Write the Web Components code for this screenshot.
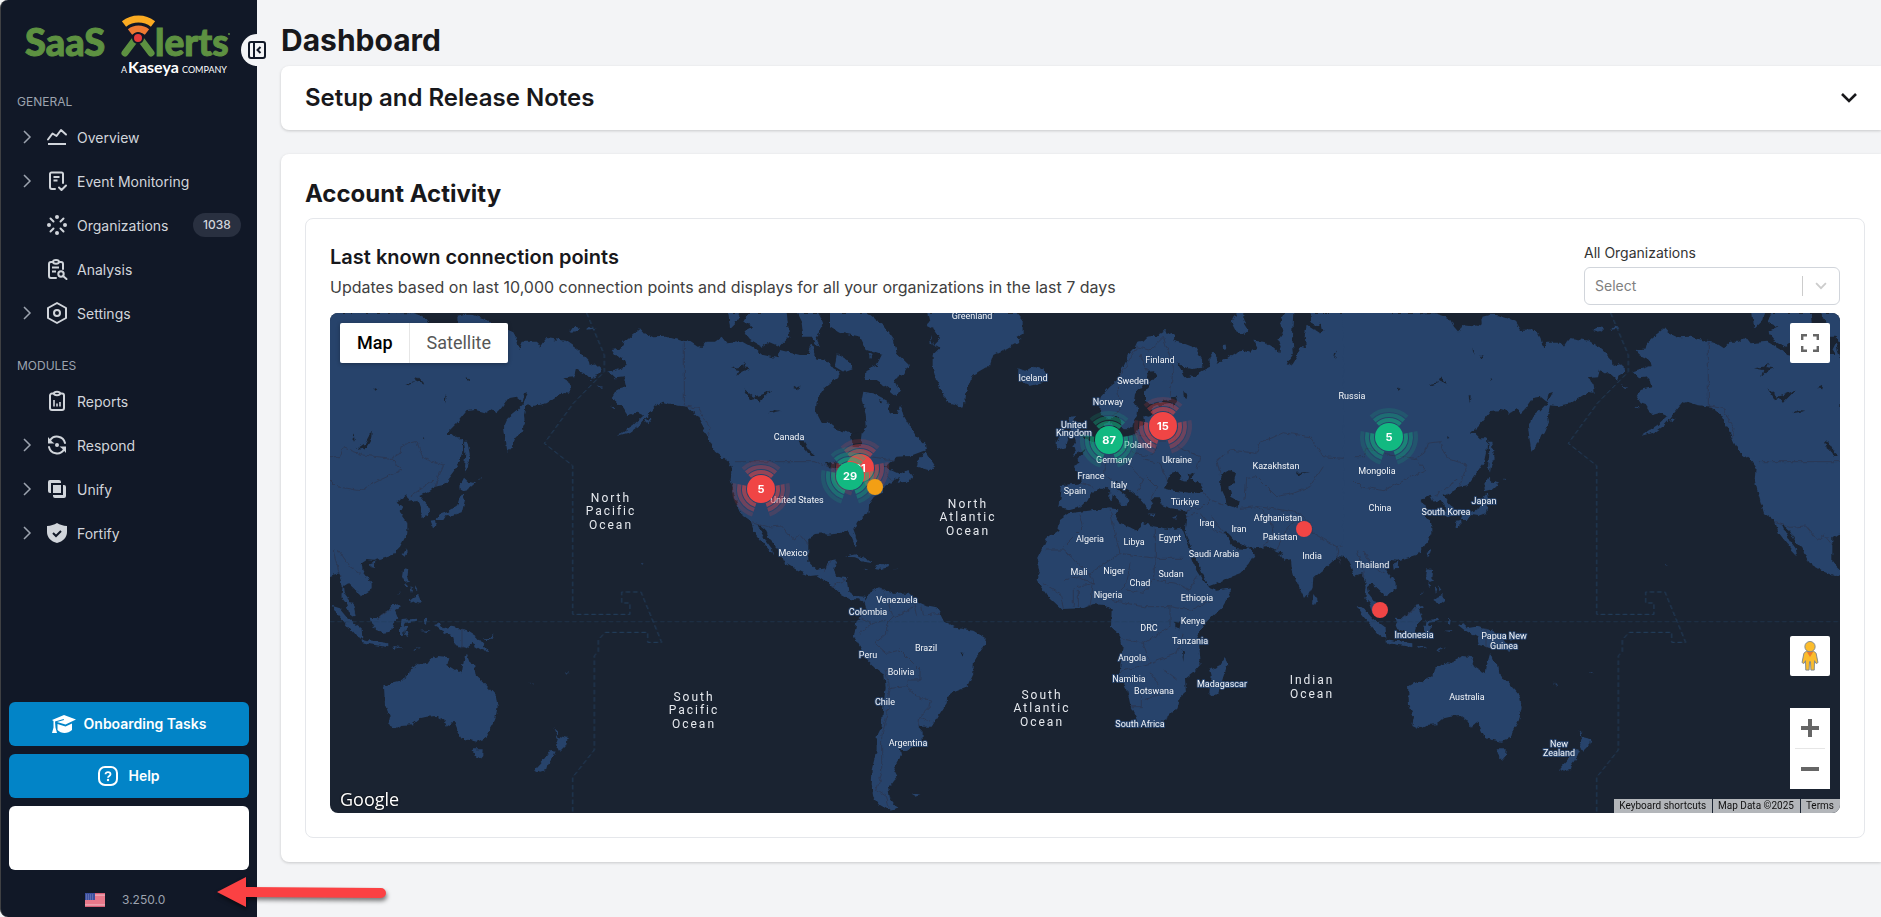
<!DOCTYPE html>
<html lang="en">
<head>
<meta charset="utf-8">
<title>SaaS Alerts - Dashboard</title>
<style>
  html, body { margin: 0; min-height: 100%; background: #f3f4f6; }
  body { font-family: Inter, "Liberation Sans", sans-serif; color: #18181b; overflow-x: hidden; }
</style>
</head>
<body>
<app-shell>
  <side-nav slot="nav">
    <nav-section heading="General">
      <nav-item icon="overview" expandable>Overview</nav-item>
      <nav-item icon="events" expandable>Event Monitoring</nav-item>
      <nav-item icon="orgs" badge="1038">Organizations</nav-item>
      <nav-item icon="analysis">Analysis</nav-item>
      <nav-item icon="settings" expandable>Settings</nav-item>
    </nav-section>
    <nav-section heading="Modules">
      <nav-item icon="reports">Reports</nav-item>
      <nav-item icon="respond" expandable>Respond</nav-item>
      <nav-item icon="unify" expandable>Unify</nav-item>
      <nav-item icon="fortify" expandable>Fortify</nav-item>
    </nav-section>
    <side-button slot="actions" icon="cap" wide>Onboarding Tasks</side-button>
    <side-button slot="actions" icon="help">Help</side-button>
  </side-nav>
  <collapsible-card>Setup and Release Notes</collapsible-card>
  <activity-card heading="Account Activity">
    <connection-panel></connection-panel>
  </activity-card>
</app-shell>

<script>
const define = (name, html, setup) => {
  const tpl = document.createElement('template');
  tpl.innerHTML = html;
  customElements.define(name, class extends HTMLElement {
    constructor() {
      super();
      this.attachShadow({ mode: 'open' }).append(tpl.content.cloneNode(true));
    }
    connectedCallback() { if (setup) setup(this, this.shadowRoot); }
  });
};

/* ---------- icons ---------- */
const S = 'fill="none" stroke="currentColor" stroke-width="2" stroke-linecap="round" stroke-linejoin="round"';
const ICONS = {
  chevron: ['0 0 16 16', `<path d="M5 2l6 6-6 6" fill="none" stroke="currentColor" stroke-width="1.5"/>`],
  down: ['0 0 20 20', `<path d="M3 6l7 7 7-7" fill="none" stroke="currentColor" stroke-width="2.6"/>`],
  overview: ['0 0 20 20', `<path d="M1 12.500l4.500-6 4 2.500L14 3l5 4.500" ${S}/><path d="M1 17h18" stroke="currentColor" stroke-width="2"/>`],
  events: ['0 0 20 20', `<path d="M8 18H5a2 2 0 0 1-2-2V3a1.500 1.500 0 0 1 1.500-1.500h10A1.500 1.500 0 0 1 16 3v9" ${S}/><path d="M6.500 6h6M6.500 9.500h4" fill="none" stroke="currentColor" stroke-width="1.800"/><path d="M12 16.500l2.500 2.500 4.500-4.500" ${S} />`],
  orgs: ['0 0 20 20', `<g fill="currentColor"><circle cx="10" cy="2" r="2"/><circle cx="10" cy="18" r="2"/><circle cx="2" cy="10" r="2"/><circle cx="18" cy="10" r="2"/></g><path d="M3.500 3.500l3 3M16.500 3.500l-3 3M3.500 16.500l3-3M16.500 16.500l-3-3" ${S}/>`],
  analysis: ['0 0 20 20', `<path d="M9 19H4a2 2 0 0 1-2-2V5a2 2 0 0 1 2-2h2M12 3h2a2 2 0 0 1 2 2v5" ${S}/><ellipse cx="9" cy="2.800" rx="3" ry="1.900" ${S}/><path d="M5 8.500h7M5 12.500h4" stroke="currentColor" stroke-width="1.800"/><circle cx="14" cy="15" r="2.700" ${S}/><path d="M16 17l3.500 3" ${S}/>`],
  settings: ['0 0 20 20', `<path d="M10 0L19 5v10l-9 5-9-5V5z" ${S}/><circle cx="10" cy="10" r="3" ${S}/>`],
  reports: ['0 0 20 20', `<path d="M7 2.500H5a2 2 0 0 0-2 2V17a2 2 0 0 0 2 2h10a2 2 0 0 0 2-2V4.500a2 2 0 0 0-2-2h-2" ${S}/><ellipse cx="10" cy="2.500" rx="3" ry="1.800" ${S}/><path d="M7 15.500V9M10 15.500v-3M13 15.500V11" stroke="currentColor" stroke-width="1.600"/>`],
  respond: ['0 0 20 20', `<path d="M3 5.500a8.200 8.200 0 0 1 15 2.500M17 14.500A8.200 8.200 0 0 1 2 12" ${S}/><path d="M1 2v6.500h6.500L5 6.500zM19 18v-6.500h-6.500L15 13.500z" fill="currentColor"/><circle cx="10" cy="10" r="2" fill="currentColor"/>`],
  unify: ['0 0 20 20', `<path d="M3 1h9a2 2 0 0 1 2 2v1H4v10H3a2 2 0 0 1-2-2V3a2 2 0 0 1 2-2z" fill="currentColor"/><path d="M6 6h8v8H6z" fill="currentColor"/><path d="M16 6h1a2 2 0 0 1 2 2v9a2 2 0 0 1-2 2H8a2 2 0 0 1-2-2v-1h10z" fill="currentColor"/>`],
  fortify: ['0 0 20 20', `<path d="M10 0c3 2 6 2.600 10 3v6c0 5.500-4 9.500-10 11C4 18.500 0 14.500 0 9V3c4-.4 7-1 10-3z" fill="currentColor"/><path d="M6 10l3 3 5-5" fill="none" stroke="#111827" stroke-width="2"/>`],
  cap: ['0 0 24 18', `<path d="M12 0l12 4.500L13.500 9.500 5 7l7-2-.3-1L3 6.500l.5 6L5 18H0l1.500-5.500V6L0 5z" fill="currentColor"/><path d="M5.500 9l8 2.500L20 8.500V15c-4 4-11 4-14.500 0z" fill="currentColor"/>`],
  help: ['0 0 20 20', `<rect x="1" y="1" width="18" height="18" rx="6" fill="none" stroke="currentColor" stroke-width="2"/><path d="M7.500 8.300C7.500 5.400 12.500 5.400 12.500 8.300 12.500 10 10 10 10 11.800" fill="none" stroke="currentColor" stroke-width="1.800"/><circle cx="10" cy="14" r="1.200" fill="currentColor"/>`],
  collapse: ['0 0 18 18', `<rect x="1" y="1" width="16" height="16" rx="2" fill="none" stroke="currentColor" stroke-width="2"/><path d="M6 1v16M12.500 6l-3 3 3 3" fill="none" stroke="currentColor" stroke-width="2"/>`],
  full: ['0 0 18 18', `<path d="M1.200 6V1.200H6M12 1.200h4.800V6M16.800 12v4.800H12M6 16.800H1.200V12" fill="none" stroke="currentColor" stroke-width="2.400"/>`],
  plus: ['0 0 18 18', `<path d="M0 9h18M9 0v18" stroke="currentColor" stroke-width="4"/>`],
  minus: ['0 0 18 18', `<path d="M0 9h18" stroke="currentColor" stroke-width="4"/>`],
  pegman: ['0 0 18 32', `<path d="M5 11h8l2.500 2L17.500 23l-2 1-1.700-3-.3 10H10l-.5-9H8.500L8 31H4.500L4.200 21l-1.700 3-2-1L2.500 13z" fill="#fbbc2c" stroke="#80868b" stroke-width="1"/><path d="M5.500 11.500h7L9 17z" fill="#ef7b28"/><circle cx="9" cy="6" r="5.500" fill="#fbbc2c" stroke="#80868b" stroke-width="1"/>`],
  flag: ['0 0 20 14', `<path d="M0 0h20v14H0z" fill="#e8788a"/><path d="M0 1h20M0 13h20" stroke="#c84560" stroke-width="1"/><path d="M10 2h10M0 12h20" stroke="#f3c4cc" stroke-width="1"/><path d="M0 0h10v7H0z" fill="#3c4f9e"/><path d="M1 2h8M1 4h8M1 6h8" stroke="#7f8cc4" stroke-width="1" stroke-dasharray="1 1"/>`],
};
define('ui-icon', `<style>:host{display:inline-flex;flex:none;width:20px;height:20px}svg{display:block;width:100%;height:100%;overflow:visible}</style><svg aria-hidden="true"></svg>`,
  (el, root) => {
    const svg = root.querySelector('svg');
    const icon = ICONS[el.getAttribute('name')];
    svg.setAttribute('viewBox', icon[0]);
    svg.innerHTML = icon[1];
  });

/* ---------- shell ---------- */
define('app-shell', `<style>
  :host { display: grid; grid-template-columns: 257px minmax(0, 1fr); min-height: 100vh; }
  main { display: flex; flex-direction: column; padding: 22px 0 55px 24px; position: relative; min-width: 0; box-sizing: border-box; }
  h1 { margin: 0 0 8px; font-size: 30px; line-height: 36px; font-weight: 700; color: #18181b; }
  .cards { display: flex; flex-direction: column; gap: 24px; }
  .toggle { position: absolute; left: -16px; top: 34px; width: 32px; height: 32px; padding: 0; border: 0; border-radius: 50%; background: #f3f4f6; color: #111827; display: grid; place-items: center; }
  .toggle ui-icon { width: 18px; height: 18px; }
  call-arrow { position: absolute; left: 217px; bottom: 6px; }
  .nav { position: relative; display: grid; }
</style>
<div class="nav"><slot name="nav"></slot></div>
<main>
  <button class="toggle" aria-label="Collapse navigation"><ui-icon name="collapse"></ui-icon></button>
  <h1>Dashboard</h1>
  <div class="cards"><slot></slot></div>
</main>
<call-arrow></call-arrow>`);

define('call-arrow', `<style>:host{display:block;width:172px;height:36px}svg{display:block;overflow:visible;filter:drop-shadow(1px 3px 2px rgba(0,0,0,.5))}</style>
<svg width="172" height="36" viewBox="0 0 172 36" aria-hidden="true"><path d="M0 17L29 2V12L164 13a5 5 0 0 1 0 10L29 22V32z" fill="#fb4143"/></svg>`);

/* ---------- side navigation ---------- */
define('brand-logo', `<style>:host{display:block}svg{display:block;overflow:visible}</style>
<svg width="212" height="84" viewBox="0 0 212 84" role="img" aria-label="SaaS Alerts, a Kaseya company">
  <g font-family="Lato, sans-serif" font-weight="900" font-size="38" fill="#5d9141" stroke="#5d9141" stroke-width="1">
    <text x="1" y="56">SaaS</text><text x="131" y="56" font-size="37">lerts</text></g>
  <path d="M101 53L110 41M127 53L118 41" stroke="#5d9141" stroke-width="7" stroke-linecap="round"/>
  <path d="M100 24a24 24 0 0 1 29 0" fill="none" stroke="#fbab22" stroke-width="7"/>
  <path d="M106 32a14 14 0 0 1 17 0" fill="none" stroke="#ee7a33" stroke-width="7"/>
  <circle cx="114" cy="38" r="5" fill="#e43b3b" stroke="#111827" stroke-width="2"/>
  <circle cx="205" cy="34" r="1" fill="#5d9141"/>
  <g font-family="Lato, sans-serif" fill="#fff"><text x="97" y="73" font-size="9">A</text>
  <text x="104" y="73" font-size="16" font-weight="700">Kaseya</text>
  <text x="158" y="73" font-size="9">COMPANY</text></g>
</svg>`);

define('side-nav', `<style>
  :host { display: flex; flex-direction: column; box-sizing: border-box; width: 257px; background: #111827; border-left: 1px solid #3f4043; border-radius: 8px 0 0 8px; }
  brand-logo { padding-left: 23px; }
  nav { display: flex; flex-direction: column; gap: 13px; }
  .foot { margin-top: auto; padding: 0 8px; display: flex; flex-direction: column; gap: 8px; }
  .blank { height: 64px; border-radius: 6px; background: #fff; }
  .version { display: flex; align-items: center; gap: 17px; height: 35px; padding: 4px 0 0 76px; color: #9ca3af; font-size: 12px; }
  .version ui-icon { height: 14px; }
</style>
<brand-logo></brand-logo>
<nav aria-label="Main"><slot></slot></nav>
<div class="foot"><slot name="actions"></slot><div class="blank"></div>
<div class="version"><ui-icon name="flag"></ui-icon><span>3.250.0</span></div></div>`);

define('nav-section', `<style>
  :host { display: block; }
  h2 { margin: 0; padding: 8px 16px 3px; font-size: 12px; line-height: 20px; font-weight: 400; text-transform: uppercase; color: #9ca3af; }
</style><h2></h2><slot></slot>`, (el, root) => { root.querySelector('h2').textContent = el.getAttribute('heading'); });

define('nav-item', `<style>
  :host { display: block; }
  a { display: flex; align-items: center; height: 44px; padding: 0 16px 0 18px; color: #d1d5db; font-size: 14px; text-decoration: none; }
  .chev { width: 16px; height: 16px; margin-right: 12px; color: #9ca3af; }
  .chev ui-icon { width: 16px; height: 16px; }
  .label { margin-left: 10px; flex: 1; }
  .badge { min-width: 48px; height: 24px; border-radius: 12px; background: #293040; font-size: 12px; font-weight: 500; line-height: 24px; text-align: center; }
</style><a href="#"><span class="chev"></span><span class="label"><slot></slot></span></a>`, (el, root) => {
  if (el.hasAttribute('expandable')) root.querySelector('.chev').innerHTML = '<ui-icon name="chevron"></ui-icon>';
  const icon = document.createElement('ui-icon');
  icon.setAttribute('name', el.getAttribute('icon'));
  root.querySelector('.chev').after(icon);
  if (el.hasAttribute('badge')) {
    const b = document.createElement('span');
    b.className = 'badge'; b.textContent = el.getAttribute('badge');
    root.querySelector('a').append(b);
  }
});

define('side-button', `<style>
  :host { display: block; }
  button { display: flex; align-items: center; justify-content: center; gap: 10px; width: 100%; height: 44px; border: 0; border-radius: 6px; background: #0284c7; color: #fff; font: 600 14px/20px Inter, sans-serif; }
  :host([wide]) button { gap: 8px; }
  :host([wide]) ui-icon { width: 24px; height: 18px; }
</style><button><slot></slot></button>`, (el, root) => {
  const icon = document.createElement('ui-icon');
  icon.setAttribute('name', el.getAttribute('icon'));
  root.querySelector('button').prepend(icon);
});
</script>

<script>
/* ---------- cards ---------- */
define('collapsible-card', `<style>
  :host { display: block; border-radius: 8px 0 0 8px; background: #fff; box-shadow: 0 1px 3px rgba(0,0,0,.18); }
  button { display: flex; align-items: center; justify-content: space-between; width: 100%; height: 64px; padding: 0 22px 0 24px; border: 0; background: none; color: #18181b; font: 600 24px/32px Inter, sans-serif; text-align: left; }
</style><button aria-expanded="false"><span><slot></slot></span><ui-icon name="down"></ui-icon></button>`);

define('activity-card', `<style>
  :host { display: block; padding: 24px 16px 24px 24px; border-radius: 8px 0 0 8px; background: #fff; box-shadow: 0 1px 3px rgba(0,0,0,.18); }
  h2 { margin: 0 0 8px; font-size: 24px; line-height: 32px; font-weight: 700; }
</style><h2></h2><slot></slot>`, (el, root) => { root.querySelector('h2').textContent = el.getAttribute('heading'); });

define('org-select', `<style>
  :host { display: block; width: 256px; }
  label { display: block; font-size: 14px; line-height: 20px; color: #333; margin-bottom: 4px; }
  .box { display: grid; grid-template-columns: 1fr 37px; align-items: center; height: 38px; box-sizing: border-box; border: 1px solid #d1d5db; border-radius: 6px; }
  select { grid-area: 1 / 1 / 2 / 3; appearance: none; height: 100%; width: 100%; padding: 0 10px; border: 0; background: none; color: #808080; font: 14px/20px Inter, sans-serif; }
  .mark { grid-area: 1 / 2; display: flex; align-items: center; justify-content: center; height: 20px; border-left: 1px solid #ccc; color: #ccc; pointer-events: none; }
  .mark ui-icon { width: 14px; height: 14px; }
</style><label for="org">All Organizations</label>
<div class="box"><select id="org"><option>Select</option></select><span class="mark"><ui-icon name="down"></ui-icon></span></div>`);

define('connection-panel', `<style>
  :host { display: block; border: 1px solid #e5e7eb; border-radius: 8px; padding: 24px; }
  header { display: flex; justify-content: space-between; align-items: flex-end; margin-bottom: 8px; }
  h3 { margin: 0 0 4px; font-size: 20px; line-height: 28px; font-weight: 600; }
  p { margin: 0 0 6px; font-size: 16px; line-height: 24px; color: #404040; }
</style>
<header><div><h3>Last known connection points</h3>
<p>Updates based on last 10,000 connection points and displays for all your organizations in the last 7 days</p></div>
<org-select></org-select></header>
<world-map></world-map>`);

/* ---------- map data: polygons in thirds of a map pixel, one group per region origin ---------- */
const REGIONS = [
  { at: '2040 -39', land: [
    // Europe, western and central Asia, India
    '290,356 275,345 268,325 272,290 300,260 325,240 335,210 350,180 358,158 375,140 382,125 400,122 412,110 430,108 440,112 450,100 465,90 470,102 485,96 496,106 490,122 520,130 555,143 576,175 577,203 545,207 520,200 502,190 512,207 520,225 534,238 540,226 560,232 566,222 572,214 600,200 598,170 610,155 625,178 620,192 650,175 680,155 700,152 718,158 728,148 742,143 730,122 760,125 785,140 808,160 812,140 805,120 818,100 810,70 820,39 1230,39 1230,760 1004,772 985,768 972,780 945,805 910,835 908,860 895,885 885,897 872,870 855,835 845,800 843,778 820,782 808,765 820,758 790,750 770,742 735,745 700,735 680,728 655,700 640,695 655,715 668,735 680,748 702,750 715,738 735,762 715,795 690,820 650,835 620,850 598,858 590,845 575,815 560,778 545,745 530,712 524,695 528,660 532,632 505,628 480,625 455,615 450,592 430,592 422,600 430,612 415,630 402,612 385,592 365,575 340,560 322,545 308,548 330,575 352,592 358,602 340,618 325,600 298,572 285,560 265,572 245,575 232,600 210,622 180,630 148,620 152,590 156,555 215,550 213,520 188,498 208,488 205,470 225,452 245,430 272,415 288,408 284,372 300,362 308,378 298,398 320,408 345,410 372,405 388,385 402,368 400,345 415,350 430,345 425,325 440,318 480,312 505,300 480,298 440,308 415,312 405,300 405,275 418,250 440,226 432,214 415,215 410,235 395,258 375,282 372,305 385,325 383,345 372,360 368,380 352,388 340,388 333,365 322,345 306,352',
    // Africa
    '178,640 235,632 300,625 322,628 315,650 328,670 360,682 380,692 395,668 430,678 480,688 510,684 520,694 538,740 548,780 560,810 580,840 600,865 620,872 662,865 662,880 635,925 610,945 580,975 562,1010 568,1040 572,1090 550,1115 525,1135 528,1180 505,1200 500,1225 475,1250 440,1275 390,1282 380,1250 360,1210 352,1170 328,1125 335,1060 338,1040 330,1005 303,980 305,928 280,915 250,912 220,925 155,927 110,885 80,840 88,810 80,780 95,750 110,715 145,690 150,660',
    '645,1070 652,1095 640,1130 625,1180 610,1190 598,1180 600,1155 605,1130 600,1110 630,1095',
    '910,882 923,900 915,915 906,910',
    '178,350 198,348 190,365 205,370 203,390 225,415 245,428 235,445 205,458 185,468 198,450 186,442 198,425 190,400 172,375', '150,405 172,403 175,420 168,442 140,450 140,425',
    '25,205 45,212 70,200 88,206 100,204 112,232 95,250 60,258 38,246 45,235 24,232',
    '680,39 665,70 680,98 708,102 715,85 700,60 700,39', '638,134 650,134 652,145 640,148',
    '326,612 350,608 354,618', '298,580 308,580 306,603 298,600', '412,640 440,642 430,646', '486,652 502,645 496,656'],
    water: ['462,565 470,545 482,520 500,515 515,530 508,540 530,545 535,525 555,515 540,535 575,555 580,575 550,580 515,575 490,572',
    '655,510 678,518 672,545 658,560 664,590 686,602 682,625 650,615 645,590 632,562 630,535 640,515',
    '850,39 905,39 900,60 915,80 935,70 940,95 928,100 905,85 890,75 884,110 888,145 868,140 860,170 848,190 830,198 836,182 852,160 846,110', '484,292 500,290 504,305 490,320', '520,275 532,282 530,300 522,295', '858,518 900,516 862,526', '975,160 984,155 972,178', '496,965 512,968 508,988 496,985', '515,1050 522,1055 520,1085'],
    lines: 'M322,260L330,330L300,350M325,240L380,140L420,150L460,112L490,200L480,290M390,165L410,215M215,550L250,562M272,415L265,450L290,480L280,520L310,545M345,410L350,450L300,460M370,405L430,410L440,450L420,470L350,455M430,345L440,410M480,312L470,360L500,420L440,420M500,440L570,470L560,510M400,480L450,490L470,545M360,500L400,540L380,580M410,530L440,560L420,600M530,632L580,620L600,600L580,575M605,650L640,695M600,600L640,615M570,640L610,690L640,700M530,650L560,640M630,520L620,480L660,450L740,460L750,430L820,398L900,410L940,470L1000,475L1010,460L1050,480L1090,570L1150,570L1230,530M705,600L710,535L740,530L800,590L850,580L900,560L940,500M690,625L740,620L780,650L790,700L760,740M740,620L820,630L870,640L830,690L800,750M870,640L900,670L910,700L980,740L1050,730M980,740L990,790M1060,710L1050,790L1070,820M210,640L220,680L160,740M300,625L310,680L330,760L240,820L160,750L110,750M436,680L436,775L520,775M330,760L436,775M240,820L250,850L200,860M360,790L350,850L300,900M436,775L430,840L400,880L350,870M430,840L500,850L540,870L560,830M300,900L400,920L480,920L540,930L610,900M330,1015L400,1030L480,980L480,920M400,1030L420,1090L330,1115M420,1090L500,1060L520,1000M420,1115L460,1180L400,1200M394,1170L394,1220L360,1220M460,1110L500,1140M165,840L200,830L250,850L240,920M205,920L205,870M190,920L190,865M160,925L150,880L100,850' },
  { at: '-30 -39', land: [
    // East Asia
    '0,39 273,40 300,48 318,58 330,80 343,95 353,75 400,80 413,70 412,50 435,44 458,45 490,55 513,65 528,90 560,88 580,97 590,115 598,150 608,125 648,125 660,140 668,128 680,114 735,122 775,150 803,180 806,195 825,190 845,208 828,225 818,242 800,225 768,208 762,232 730,235 748,245 752,278 732,276 710,290 680,310 640,318 618,316 612,345 615,370 602,400 588,410 575,440 562,455 557,420 552,380 565,350 590,330 610,308 627,276 615,280 608,305 590,290 565,295 540,330 530,340 515,328 500,338 470,330 440,333 410,370 378,402 395,402 408,415 430,415 428,450 420,485 400,515 370,555 345,560 330,572 298,588 310,602 325,618 328,645 310,655 303,640 302,618 290,600 268,605 258,584 230,605 250,620 240,640 262,670 262,700 240,740 215,765 160,782 140,780 125,790 128,812 155,848 155,868 120,890 112,875 85,850 72,858 75,882 100,915 108,953 88,940 78,910 64,892 68,858 55,820 30,828 18,795 0,760',
    '432,425 442,425 452,475 442,492 438,518 432,500 436,460', '432,533 445,545 465,550 445,568 420,574 418,560', '428,580 435,600 425,640 400,648 380,645 370,660 350,660 355,645 385,635 410,620 420,590', '332,662 348,660 350,675 340,685', '258,745 263,755 252,772 248,762', '150,790 166,784 164,802 152,806',
    '250,805 265,808 262,835 270,845 255,848 246,830', '280,890 295,885 302,902 288,913 268,900', '252,850 262,856 256,860', '272,862 280,866 276,880', '285,856 292,868 286,874', '232,887 244,872 236,886', '477,538 486,530 482,540',
    '38,918 60,925 85,955 125,985 127,1015 105,1005 75,970 50,940', '125,1018 155,1022 205,1030 205,1042 150,1033 125,1026', '220,1038 250,1042 222,1046', '280,1050 304,1039 284,1054',
    '152,953 175,955 200,935 222,908 240,922 225,930 235,955 220,970 212,995 190,998 165,990 155,965', '245,960 288,956 288,962 255,968 250,978 268,978 258,988 268,1012 256,1005 252,988 248,1012 240,1010 240,985', '312,958 320,956 318,975 312,970', '300,992 332,990 320,996',
    '342,975 360,970 368,985 395,980 440,990 470,1010 485,1028 505,1053 485,1050 455,1032 440,1045 405,1035 400,1012 378,1000 358,988', '492,1015 512,1014 520,1003 518,1015 500,1022',
    // Australia and New Zealand
    '192,1160 210,1150 240,1142 265,1128 270,1108 285,1100 300,1088 322,1092 332,1078 355,1068 388,1072 382,1095 405,1110 425,1120 432,1080 438,1058 448,1085 462,1095 468,1128 490,1145 510,1168 528,1188 533,1220 525,1260 505,1295 500,1313 470,1325 425,1315 412,1290 402,1265 380,1280 375,1265 350,1248 320,1250 300,1255 278,1273 245,1275 225,1285 205,1275 210,1250 195,1215',
    '458,1348 488,1348 487,1365 475,1379 464,1368', '700,1285 712,1295 715,1310 743,1317 738,1335 718,1355 708,1335 714,1315', '692,1350 708,1352 700,1370 682,1395 678,1410 660,1415 645,1408 670,1380', '628,1147 642,1155 640,1158', '738,1117 746,1117 744,1121', '963,791 971,794 966,797', '748,90 762,80 780,85 770,94 752,95', '830,256 850,262 840,264'],
    water: ['158,395 157,412 140,440 110,447 135,430 150,402', '290,228 313,254 285,240', '255,252 290,246 262,256', '100,400 105,425 98,415', '160,262 172,268 166,272', '440,235 448,238 442,242', '445,203 460,212', '374,283 380,290 376,310', '310,408 316,414 310,416', '408,168 415,165 414,178', '386,140 390,150 388,168', '540,222 546,230'],
    lines: 'M30,470L60,470L70,443L130,465L215,475L245,510L180,540L120,572L50,560L30,540M215,475L240,460L250,430L290,425L310,475L370,495L345,560M270,590L340,540M426,985L426,1045M55,750L90,800L120,820M40,752L60,830M175,955L215,925' },
  { at: '1110 -39', land: [
    // North America
    '0,145 -30,125 -65,120 -100,110 -140,112 -168,98 -180,85 -205,105 -230,125 -235,145 -265,150 -255,165 -225,180 -220,198 -275,215 -255,235 -225,232 -218,262 -250,270 -262,290 -250,310 -235,315 -215,345 -190,338 -170,347 -200,375 -250,408 -210,397 -180,375 -150,340 -125,310 -110,305 -80,315 -40,320 -10,345 10,380 30,428 45,455 85,485 95,500 92,540 105,590 120,640 152,662 165,700 185,725 205,750 219,765 215,745 198,722 180,690 172,672 195,690 210,720 235,745 255,790 300,815 330,828 350,826 368,838 400,860 425,885 450,898 475,898 492,905 493,890 470,888 445,878 440,835 410,830 402,812 410,778 385,782 377,805 350,810 325,785 325,715 345,702 370,700 385,704 420,700 428,692 445,695 455,710 468,742 472,722 460,690 472,665 505,640 508,610 522,590 545,580 555,558 575,545 600,530 590,548 620,545 640,530 625,510 598,522 572,510 555,500 590,470 630,468 678,450 675,430 650,410 630,380 610,345 602,315 590,345 570,340 560,300 520,280 490,275 485,300 497,340 500,380 485,400 480,440 460,440 452,400 410,388 385,365 365,368 348,335 350,300 375,265 395,248 415,230 420,215 400,205 385,185 350,175 335,130 325,150 335,165 300,165 240,150 235,175 190,165 170,148 130,125 80,130 65,110 45,125 20,125',
    '85,39 90,85 115,60 120,39', '145,39 260,39 268,110 240,140 205,125 185,140 150,120 130,95 160,80 130,65', '290,39 355,39 370,80 350,110 360,145 335,110 310,110 305,70', '390,39 390,80 415,95 430,100 480,110 500,150 545,165 530,195 500,210 495,240 525,240 560,262 590,288 600,270 580,240 610,225 627,195 590,160 582,120 550,75 510,45 500,39', '410,160 440,180 458,205 430,215 405,200', '505,160 515,165 510,175',
    '655,480 675,455 688,475 705,500 685,510 650,500', '-342,90 -330,80 -310,85', '-165,360 -145,356 -155,370', '-270,320 -255,322 -262,326',
    '685,39 690,60 680,75 700,85 720,115 700,135 690,108 692,130 718,145 698,165 698,200 708,240 725,270 740,305 765,312 782,323 792,318 795,280 808,250 815,230 835,215 870,195 880,165 920,145 965,120 948,112 968,100 968,60 950,39',
    '435,770 470,763 500,778 520,790 500,787 465,772', '528,795 550,792 570,800 545,807 525,804', '490,806 502,808 494,810', '582,806 594,807 588,810',
    // South America
    '490,905 510,875 540,862 548,872 560,870 580,878 630,878 640,900 675,915 710,922 725,945 735,965 775,985 820,992 857,1015 855,1035 822,1080 820,1120 800,1162 765,1175 742,1190 740,1210 720,1240 695,1280 655,1280 668,1295 668,1325 620,1350 600,1350 603,1365 580,1405 593,1430 565,1465 570,1495 595,1526 570,1532 540,1515 520,1490 512,1450 515,1410 530,1350 530,1310 545,1280 550,1220 557,1160 553,1125 520,1100 500,1080 480,1040 462,1010 470,960 485,950 497,930', '636,1482 662,1482 645,1487', '832,1516 846,1522'],
    water: ['90,205 120,200 135,188 130,202 150,205 125,215 112,228 118,210', '130,265 160,290 180,285 215,270 190,295 180,305 165,295 150,298', '205,340 220,330 245,332 215,338', '280,265 298,256 295,268', '300,420 312,425 330,455 345,468 330,468 318,450 305,440', '375,490 400,485 425,495 415,505 385,505', '440,510 450,520 445,560 438,540', '140,382 148,385', '600,405 608,412', '535,300 550,305 545,312', '785,1060 790,1055 788,1070', '800,1130 812,1135', '455,400 480,400 480,440 458,440'],
    lines: 'M-47,125L-47,318L-30,320L-5,325L30,385L25,410M105,485L345,485L390,500L440,530M155,668L200,682L245,678L280,720L300,705L325,735M560,520L575,545M510,470L580,480M370,815L385,795L395,780M395,860L440,835M545,870L560,900L580,950L560,970L560,1000L525,1030L560,1060L600,1050L640,1090L660,1110L660,1140L625,1140L620,1160L570,1165L555,1110M485,955L520,970L480,1000M520,970L560,960M580,950L620,935L640,920M665,920L670,945L720,940M640,900L650,950M620,1160L660,1195L695,1200L690,1220L660,1250L655,1280M660,1250L700,1270M570,1165L560,1250L545,1310L545,1420L530,1470L560,1490L568,1530' },
];
const DASHES = 'M770,0L823,126V176L730,271L643,391L728,458V904H900V870H875V837H933L995,988H953V958H825L805,981V1016L793,1028V1311L728,1393V1500';

const LABELS = [['Greenland',642,3],['Canada',459,124],['United States',467,187],['Mexico',463,240],['Iceland',703,65],['Finland',830,47],['Sweden',803,68],['Norway',778,89],['United',744,112],['Kingdom',744,120],['Poland',808,132],['Germany',784,147],['Ukraine',847,147],['Russia',1022,83],['Kazakhstan',946,153],['Mongolia',1047,158],['France',761,163],['Italy',789,172],['Spain',745,178],['Türkiye',855,189],['China',1050,195],['Afghanistan',948,205],['Iraq',877,210],['Iran',909,216],['Pakistan',950,224],['Algeria',760,226],['Libya',804,229],['Egypt',840,225],['Saudi Arabia',884,241],['India',982,243],['Mali',749,259],['Niger',784,258],['Chad',810,270],['Sudan',841,261],['Nigeria',778,282],['Ethiopia',867,285],['Kenya',863,308],['DRC',819,315],['Tanzania',860,328],['Angola',802,345],['Namibia',799,366],['Botswana',824,378],['Madagascar',892,371],['South Africa',810,411],['Thailand',1042,252],['Indonesia',1084,322],['Venezuela',567,287],['Colombia',538,299],['Brazil',596,335],['Peru',538,342],['Bolivia',571,359],['Chile',555,389],['Argentina',578,430],['Papua New',1174,323],['Guinea',1174,333],['Australia',1137,384],['New',1229,431],['Zealand',1229,440],['Japan',1154,188],['South Korea',1116,199]];
const OCEANS = [['North',281,185],['Pacific',281,198],['Ocean',281,212],['North',638,191],['Atlantic',638,204],['Ocean',638,218],['South',364,384],['Pacific',364,397],['Ocean',364,411],['South',712,382],['Atlantic',712,395],['Ocean',712,409],['Indian',982,367],['Ocean',982,381]];
const RED = '#f04545', GREEN = '#12b981', AMBER = '#f39f15';
const CLUSTERS = [['5',431,176,RED],['21',530,155,RED],['29',520,163,GREEN],['87',779,127,GREEN],['15',833,113,RED],['5',1059,124,GREEN]];
const DOTS = [[545,174,AMBER],[974,216,RED],[1050,297,RED]];

const poly = p => `<path d="M${p}z"/>`;
const region = r => `<g transform="translate(${r.at})"><g fill="#27436b">${r.land.map(poly).join('')}</g><g fill="#1a2331">${r.water.map(poly).join('')}</g><path d="${r.lines}" fill="none" stroke="#2b3650" stroke-width="2.500"/></g>`;
const cluster = ([n, x, y, c]) => `<g transform="translate(${x} ${y})"><g fill="none" stroke="${c}" stroke-width="4" transform="rotate(-132)">
  ${[[17, .55], [22, .36], [27, .16]].map(([r, o]) => `<circle r="${r}" pathLength="360" stroke-dasharray="84 36" opacity="${o}"/>`).join('')}</g>
  <circle r="14" fill="${c}"/><text class="count" y="4">${n}</text></g>`;

define('world-map', `<style>
  :host { display: grid; grid-template: 500px / minmax(0, 1fr); position: relative; overflow: hidden; border-radius: 8px; background: #1a2331; font-family: Roboto, sans-serif; }
  svg.canvas { width: 100%; height: 100%; display: block; }
  text { text-anchor: middle; fill: #f4f6f9; }
  .place { font-size: 9px; stroke: #27436b; stroke-width: 2px; paint-order: stroke; stroke-linejoin: round; }
  .ocean { font-size: 12px; letter-spacing: 2px; fill: #e6e9ee; }
  .count { font-size: 11px; font-weight: 700; fill: #fff; font-family: Inter, sans-serif; }
  .types { position: absolute; left: 10px; top: 10px; display: flex; border-radius: 2px; overflow: hidden; box-shadow: 0 1px 4px rgba(0,0,0,.3); }
  button { border: 0; margin: 0; padding: 0; background: #fff; color: #666; font: 400 18px/40px Roboto, sans-serif; }
  .types button { padding: 0 17px; height: 40px; color: #565656; }
  .types .on { padding-right: 16px; color: #000; font-weight: 500; border-right: 1px solid #e6e6e6; }
  .tools { position: absolute; right: 10px; top: 10px; bottom: 24px; width: 40px; display: flex; flex-direction: column; }
  .tools button { display: grid; place-items: center; width: 40px; height: 40px; }
  .tools ui-icon { width: 18px; height: 18px; }
  .tools .peg { margin: auto 0 32px; }
  .tools .peg ui-icon { height: 30px; }
  .tools > button { border-radius: 2px; }
  .zoom { background: #fff; border-radius: 2px; }
  .zoom hr { margin: 0 5px; border: 0; height: 1px; background: #e6e6e6; }
  .legal { position: absolute; right: 0; bottom: 0; display: flex; gap: 1px; font-size: 10px; line-height: 14px; }
  .legal a { padding: 0 6px 0 5px; background: #b3b6ba; color: #111; text-decoration: none; }
  .google { position: absolute; left: 10px; bottom: 2px; font: 500 18px/24px "Open Sans", sans-serif; color: #fff; text-shadow: 0 0 2px #000; text-decoration: none; }
</style>
<svg class="canvas" viewBox="0 0 1510 500" preserveAspectRatio="xMidYMid slice">
  <defs><filter id="coast" x="0" y="0" width="1510" height="500" filterUnits="userSpaceOnUse" color-interpolation-filters="sRGB"><feTurbulence type="fractalNoise" baseFrequency="0.180" numOctaves="2" seed="4"/><feDisplacementMap in="SourceGraphic" scale="5" xChannelSelector="R" yChannelSelector="G"/></filter>
  <g id="world">${REGIONS.map(region).join('')}</g></defs>
  <g filter="url(#coast)"><g transform="scale(.33333)"><use href="#world" x="-3072"/><use href="#world"/><use href="#world" x="3072"/></g></g>
  <g fill="none" stroke="#24405f" stroke-width="3" transform="scale(.33333)" stroke-dasharray="14 8"><path d="${DASHES}"/><path d="${DASHES}" transform="translate(3072)"/><path d="M0,925H4530" opacity=".7"/></g>
  ${LABELS.map(l => `<text class="place" x="${l[1]}" y="${l[2] + 3}">${l[0]}</text>`).join('')}
  ${OCEANS.map(l => `<text class="ocean" x="${l[1]}" y="${l[2] + 4}">${l[0]}</text>`).join('')}
  ${CLUSTERS.map(cluster).join('')}
  ${DOTS.map(d => `<circle cx="${d[0]}" cy="${d[1]}" r="8" fill="${d[2]}"/>`).join('')}
</svg>
<div class="types"><button class="on">Map</button><button>Satellite</button></div>
<div class="tools"><button aria-label="Full screen"><ui-icon name="full"></ui-icon></button>
<button class="peg" aria-label="Street View"><ui-icon name="pegman"></ui-icon></button>
<div class="zoom"><button aria-label="Zoom in"><ui-icon name="plus"></ui-icon></button><hr><button aria-label="Zoom out"><ui-icon name="minus"></ui-icon></button></div></div>
<a class="google" href="#">Google</a>
<div class="legal"><a href="#">Keyboard shortcuts</a><a href="#">Map Data ©2025</a><a href="#">Terms</a></div>`);
</script>
</body>
</html>
